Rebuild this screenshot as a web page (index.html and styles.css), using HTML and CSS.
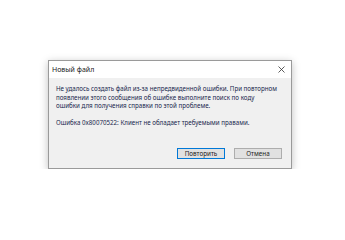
FILE: index.html
```html
<!DOCTYPE html>
<html>
<head>
  <title>Новый файл</title>
  <link rel="stylesheet" href="styles.css">
</head>
<body>

<div class="dialog">
  <div class="titlebar">
    <span class="title">Новый файл</span>
    <svg class="close" width="7" height="7" viewBox="0 0 7 7">
      <path d="M0.5 0.5 L6.5 6.5 M6.5 0.5 L0.5 6.5" stroke="#333" stroke-width="0.8" fill="none"/>
    </svg>
  </div>

  <div class="content">
    <p class="message">Не удалось создать файл из-за непредвиденной ошибки. При повторном появлении этого сообщения об ошибке выполните поиск по коду<br>ошибки для получения справки по этой проблеме.</p>
    <p class="message">Ошибка 0x80070522: Клиент не обладает требуемыми правами.</p>
  </div>

  <div class="buttons">
    <button class="btn btn-default">Повторить</button>
    <button class="btn">Отмена</button>
  </div>
</div>

</body>
</html>
```

FILE: styles.css
```css
body {
  margin: 0;
  padding: 60px 0 0 48px;
  background-color: white;
  font-family: "Noto Sans", sans-serif;
  color: #1a1a1a;
}

.dialog {
  width: 242px;
  border: 1px solid #9a9a9a;
  background-color: #f0f0f0;
  box-shadow: 0 2px 8px rgba(0, 0, 0, 0.25); /* soft window shadow */
}

.titlebar {
  display: flex;
  justify-content: space-between;
  align-items: center;
  height: 17px;
  padding: 0 6px 0 3px;
  background-color: white;
}

.title {
  font-size: 7px;
  color: #222;
}

.content {
  padding: 7px 4px 0 7px;
}

.message {
  margin: 0 0 8px 0;
  font-size: 6.2px;
  line-height: 8.6px;
  color: #18264d;
}

.buttons {
  display: flex;
  justify-content: flex-end;
  gap: 9px;
  padding: 13px 9px 9px 0;
}

.btn {
  width: 48px;
  height: 11px;
  padding: 0;
  font-family: "Noto Sans", sans-serif;
  font-size: 6.3px;
  line-height: 9px;
  color: #222;
  background-color: #e1e1e1;
  border: 1px solid #adadad;
}

.btn-default {
  border-color: #0078d7;
}
```
